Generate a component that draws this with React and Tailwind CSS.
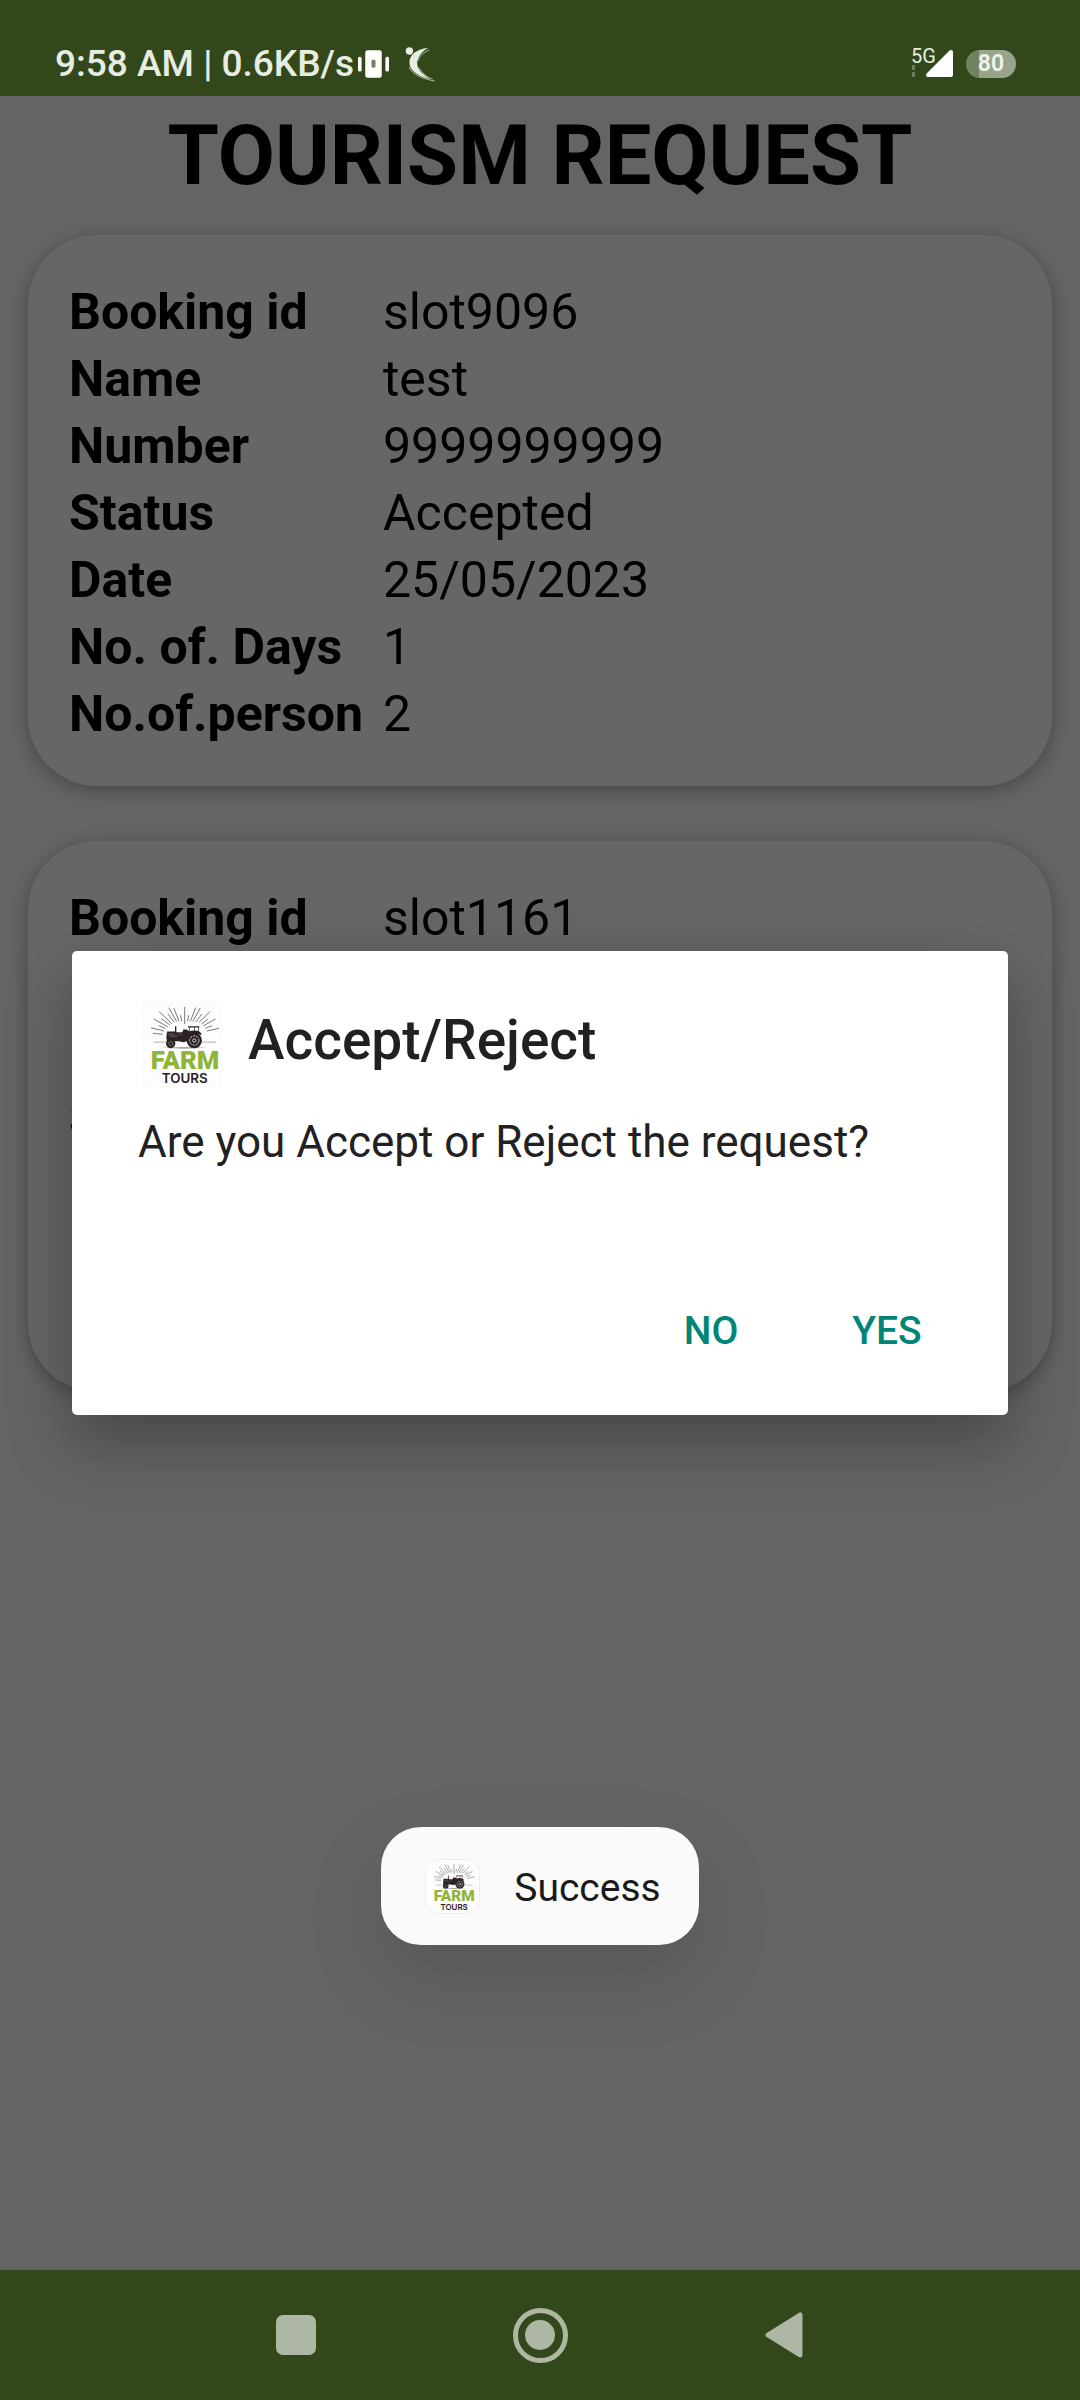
import React from "react";

const bookings = [
  {
    id: "slot9096",
    rows: [
      ["Booking id", "slot9096"],
      ["Name", "test"],
      ["Number", "9999999999"],
      ["Status", "Accepted"],
      ["Date", "25/05/2023"],
      ["No. of. Days", "1"],
      ["No.of.person", "2"],
    ],
  },
  {
    id: "slot1161",
    rows: [
      ["Booking id", "slot1161"],
      ["Name", ""],
      ["Number", ""],
      ["Status", ""],
      ["Date", ""],
      ["No. of. Days", ""],
      ["No.of.person", ""],
    ],
  },
];

/* Sunburst behind the tractor: angle in degrees, inner and outer radius. */
const rays = [
  [-175, 66, 96], [-166, 64, 104], [-158, 62, 84], [-151, 58, 106],
  [-143, 56, 88], [-136, 54, 106], [-127, 52, 84], [-119, 50, 98],
  [-111, 48, 90], [-101, 46, 64], [-90, 36, 88], [-79, 46, 64], [-69, 48, 92],
  [-61, 50, 96], [-52, 54, 84], [-44, 60, 106], [-36, 62, 86],
  [-29, 64, 106], [-21, 66, 88], [-13, 68, 106],
];

function FarmLogo({ viewBox, className }) {
  return (
    <svg viewBox={viewBox} className={className} role="img" aria-label="Farm Tours">
      <rect x="-12" y="0" width="270" height="266" fill="#fdfdfd" />
      <g stroke="#ececec" strokeWidth="2" strokeDasharray="3 9 6 14">
        <path d="M6 40 40 6M4 120 60 60M2 200 40 160M8 250 60 210M190 40 236 8M200 220 240 180M205 255 240 235M10 12h226M14 258h50" fill="none" />
      </g>
      <g stroke="#3b3536" strokeWidth="2">
        {rays.map(([deg, from, to]) => {
          const a = (deg * Math.PI) / 180;
          return (
            <line
              key={deg}
              x1={131 + from * Math.cos(a)}
              y1={108 + from * Math.sin(a)}
              x2={131 + to * Math.cos(a)}
              y2={108 + to * Math.sin(a)}
            />
          );
        })}
      </g>
      <path d="M38 126h36M184 126h42" stroke="#8d8888" strokeWidth="2" />
      <path d="M60 143q70-5 138 0-70 5-138 0Z" fill="#a5a1a1" />
      <g fill="#2b2223">
        <path d="M102 78h4v18h18l3-8h10l4 4 3-2v8l-4 2v10l6 4v8l-20 4-12-3H78l-2-10 2-19h24Z" />
        <path d="M141 78h34v4h-34ZM144 82h2v14h-2ZM160 82h2v12h-2ZM172 82h2v12h-2Z" />
        <path d="M136 104q6-15 28-13 16 1 18 14l-8-3-26 2-6 12Z" />
        <circle cx="160" cy="121" r="23" />
        <circle cx="89" cy="130" r="14" />
      </g>
      <g fill="none" stroke="#d8d5d5">
        <circle cx="160" cy="121" r="14" strokeWidth="3" strokeDasharray="7 3" />
        <circle cx="160" cy="121" r="5" strokeWidth="3" />
        <circle cx="89" cy="130" r="6" strokeWidth="2" strokeDasharray="5 3" />
        <path d="M82 102h18M84 108h26M112 102h10" strokeWidth="1" />
      </g>
      <text x="132" y="207" textAnchor="middle" fontSize="77" fontWeight="900" fill="#8fb43a">FARM</text>
      <text x="131" y="249" textAnchor="middle" fontSize="40" fontWeight="600" fill="#2b2223" fontFamily="Inter, sans-serif">TOURS</text>
    </svg>
  );
}

function StatusBar() {
  return (
    <header className="flex h-24 shrink-0 items-end justify-between bg-[#32481b] pr-16 pl-[55px] text-[#e8ede3]">
      <div className="flex h-16 items-center">
        <span className="text-[37px] leading-[44px] font-medium whitespace-nowrap">9:58 AM | 0.6KB/s</span>
        <svg viewBox="52 54 100 90" className="ml-[3px] h-[30px] w-[33px]" aria-label="Vibrate">
          <rect x="55" y="77" width="11" height="45" rx="5" fill="#fff" />
          <rect x="138" y="77" width="11" height="45" rx="5" fill="#fff" />
          <rect x="77" y="57" width="50" height="84" rx="7" fill="#fff" />
          <rect x="96" y="86" width="12" height="24" rx="4" fill="#6f8260" />
        </svg>
        <svg viewBox="195 45 95 110" className="ml-[14px] h-[37px] w-8" aria-label="Notification">
          <circle cx="211" cy="60" r="11" fill="#e8ede3" />
          <path d="M266 51C234 54 211 70 211 94c0 26 30 43 64 50C250 132 233 112 234 94c1-16 14-32 32-43Z" fill="#e8ede3" />
          <path d="M270 57c-16 6-30 18-34 32M210 108c10 23 42 35 76 41M240 110c8 14 20 26 40 34" fill="none" stroke="#e8ede3" strokeWidth="2" />
        </svg>
      </div>
      <div className="flex h-16 items-center">
        <div className="relative h-8 w-11">
          <span className="absolute top-0 left-0 -mt-1 text-[20px] leading-6">5G</span>
          <svg viewBox="0 0 44 32" className="h-8 w-11" aria-label="Signal">
            <rect x="1" y="17" width="3" height="5" rx="1" fill="#6f8260" />
            <rect x="1" y="24" width="3" height="5" rx="1" fill="#6f8260" />
            <path d="M40 4 17 27H40Z" fill="#fff" stroke="#fff" strokeWidth="4" strokeLinejoin="round" />
          </svg>
        </div>
        <div className="ml-[11px] flex h-7 w-[50px] items-center justify-center rounded-full bg-linear-to-r from-[#708260] from-25% to-[#98a58c] to-25% text-[23px] leading-7 font-semibold text-[#f0f3ee]">
          80
        </div>
      </div>
    </header>
  );
}

function BookingCard({ rows }) {
  return (
    <section className="rounded-[69px] bg-white px-[41px] pt-11 pb-[38px] shadow-[0_4px_18px_rgba(0,0,0,0.3)]">
      <table className="text-[50px] text-black">
        <tbody>
          {rows.map(([label, value]) => (
            <tr key={label} className="h-[67px] leading-[59px]">
              <th scope="row" className="p-0 pr-5 text-left font-bold whitespace-nowrap">{label}</th>
              <td className="p-0">{value}</td>
            </tr>
          ))}
        </tbody>
      </table>
    </section>
  );
}

function NavBar() {
  return (
    <nav className="flex h-[130px] shrink-0 items-center justify-center gap-[184px] bg-[#32481b] text-[#adb7a3]">
      <button type="button" aria-label="Recent apps" className="flex w-[60px] justify-center">
        <span className="size-10 rounded-[7px] bg-current" />
      </button>
      <button type="button" aria-label="Home" className="flex w-[60px] justify-center">
        <span className="flex size-[55px] items-center justify-center rounded-full border-[5px] border-current">
          <span className="size-[30px] rounded-full bg-current" />
        </span>
      </button>
      <button type="button" aria-label="Back" className="flex w-[60px] justify-center">
        <svg viewBox="0 0 38 46" className="h-[46px] w-[38px]">
          <path d="M3 23 35 3v40Z" fill="currentColor" stroke="currentColor" strokeWidth="5" strokeLinejoin="round" />
        </svg>
      </button>
    </nav>
  );
}

export default function App() {
  return (
    <div className="flex min-h-screen flex-col overflow-hidden bg-[#32481b] font-[Roboto,sans-serif]">
      <StatusBar />
      <main className="relative flex-1 overflow-hidden bg-[#fafafa]">
        <h1 className="pt-[11px] text-center text-[83px] leading-[98px] font-bold text-black">TOURISM REQUEST</h1>
        <div className="flex flex-col gap-[55px] px-7 pt-[30px]">
          {bookings.map((b) => (
            <BookingCard key={b.id} rows={b.rows} />
          ))}
        </div>

        <div className="absolute inset-0 flex items-center justify-center bg-black/60 px-[72px]">
          <div
            role="dialog"
            aria-labelledby="dialog-title"
            aria-describedby="dialog-message"
            className="w-full rounded-[5px] bg-white px-[66px] pt-[49px] pb-[18px] text-[#212121] shadow-[0_26px_66px_rgba(0,0,0,0.3)]"
          >
            <div className="flex items-start gap-[25px]">
              <FarmLogo viewBox="0 0 246 266" className="ml-[3px] h-[89px] w-[82px]" />
              <h2 id="dialog-title" className="text-[55px] leading-[80px] font-medium">Accept/Reject</h2>
            </div>
            <p id="dialog-message" className="mt-[27px] text-[44px] leading-[52px]">Are you Accept or Reject the request?</p>
            <div className="-mr-[33px] mt-[97px] flex justify-end text-[39px] font-medium text-[#008577]">
              <button type="button" className="h-[132px] w-[176px] uppercase">No</button>
              <button type="button" className="h-[132px] w-[176px] uppercase">Yes</button>
            </div>
          </div>
        </div>

        <div className="absolute inset-x-0 bottom-[325px] flex justify-center">
          <div role="status" className="flex h-[118px] items-center rounded-[40px] bg-[#fafafa] pr-[38px] pl-[44px] text-[#1a1a1a] shadow-[0_32px_80px_rgba(0,0,0,0.13)]">
            <FarmLogo viewBox="-10 0 266 266" className="size-[55px] rounded-[14px] border border-[#eeeeee]" />
            <span className="ml-[34px] pt-1 text-[39px] leading-[46px]">Success</span>
          </div>
        </div>
      </main>
      <NavBar />
    </div>
  );
}
